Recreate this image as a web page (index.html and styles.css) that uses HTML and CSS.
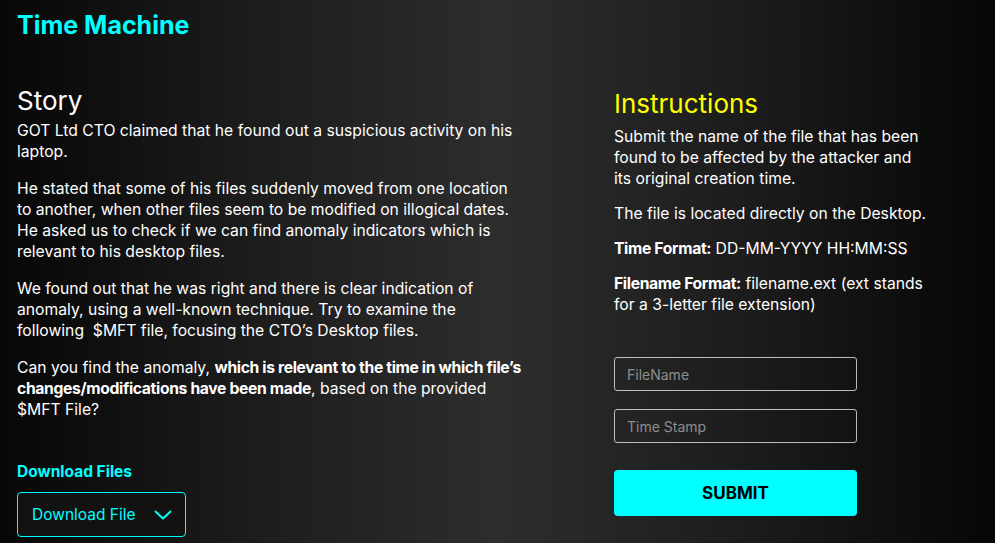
FILE: index.html
```html
<!DOCTYPE html>
<html>
<head>
<meta charset="utf-8">
<link rel="stylesheet" href="styles.css">
</head>
<body>
<div class="page">
  <h1 class="title">Time Machine</h1>
  <div class="columns">
    <section class="story">
      <h2 class="heading">Story</h2>
      <p>GOT Ltd CTO claimed that he found out a suspicious activity on his<br>laptop.</p>
      <p>He stated that some of his files suddenly moved from one location<br>to another, when other files seem to be modified on illogical dates.<br>He asked us to check if we can find anomaly indicators which is<br>relevant to his desktop files.</p>
      <p>We found out that he was right and there is clear indication of<br>anomaly, using a well-known technique. Try to examine the<br>following&nbsp; $MFT file, focusing the CTO’s Desktop files.</p>
      <p>Can you find the anomaly, <strong>which is relevant to the time in which file’s<br>changes/modifications have been made</strong>, based on the provided<br>$MFT File?</p>
      <div class="downloads">
        <div class="dl-label">Download Files</div>
        <button class="dl-select" type="button">
          <span>Download File</span>
          <svg width="18" height="10" viewBox="0 0 18 10"><path d="M1.5 1.5 L9 8.5 L16.5 1.5" fill="none" stroke="#00ffff" stroke-width="2" stroke-linecap="round" stroke-linejoin="round"/></svg>
        </button>
      </div>
    </section>
    <section class="instructions">
      <h2 class="heading yellow">Instructions</h2>
      <p>Submit the name of the file that has been<br>found to be affected by the attacker and<br>its original creation time.</p>
      <p>The file is located directly on the Desktop.</p>
      <p><strong>Time Format:</strong> DD-MM-YYYY HH:MM:SS</p>
      <p><strong>Filename Format:</strong> filename.ext (ext stands<br>for a 3-letter file extension)</p>
      <form class="form">
        <input class="field" type="text" placeholder="FileName">
        <input class="field" type="text" placeholder="Time Stamp">
        <button class="submit" type="button">SUBMIT</button>
      </form>
    </section>
  </div>
</div>
</body>
</html>
```
FILE: styles.css
```css
* { box-sizing: border-box; }
html, body { margin: 0; height: 100%; }
body {
  background: linear-gradient(to right, #070707 0%, #1c1c1c 25%, #2d2d2d 50%, #1c1c1c 75%, #060606 100%);
  font-family: Inter, "Noto Sans", sans-serif;
  color: #ffffff;
  overflow: hidden;
}
.page { padding: 10px 0 0 17px; }
.title {
  margin: 0;
  font-size: 25px;
  font-weight: 700;
  color: #00ffff;
  line-height: 30px;
}
.columns {
  display: flex;
  gap: 92px;
  margin-top: 45px;
}
.story { width: 505px; white-space: nowrap; }
.instructions { width: 340px; padding-top: 3px; white-space: nowrap; }
.heading {
  margin: 0 0 3px;
  font-size: 26px;
  font-weight: 400;
  line-height: 32px;
}
.instructions .heading { margin-bottom: 6px; }
.yellow { color: #ffff00; }
p {
  margin: 0 0 16px;
  font-size: 15.7px;
  line-height: 21px;
}
.instructions p { margin-bottom: 14px; }
strong { font-weight: 700; letter-spacing: -0.35px; }
.downloads { margin-top: 42px; }
.dl-label {
  font-size: 15.5px;
  font-weight: 700;
  color: #00ffff;
  line-height: 20px;
  margin-bottom: 10px;
}
.dl-select {
  display: flex;
  align-items: center;
  justify-content: space-between;
  height: 45px;
  width: 169px;
  padding: 0 13px 0 14px;
  background: #121212;
  border: 1px solid #00ffff;
  border-radius: 4px;
  color: #00ffff;
  font-family: inherit;
  font-size: 15.5px;
  white-space: nowrap;
}
.form {
  display: flex;
  flex-direction: column;
  width: 243px;
  margin-top: 42px;
}
.field {
  height: 34px;
  margin-bottom: 18px;
  background: transparent;
  border: 1px solid #bdbdbd;
  border-radius: 3px;
  padding: 0 12px;
  font-family: inherit;
  font-size: 14px;
  color: #fff;
}
.field::placeholder { color: #8e8e8e; }
.field + .field { margin-bottom: 27px; }
.submit {
  height: 46px;
  background: #00ffff;
  border: none;
  border-radius: 4px;
  color: #000;
  font-family: inherit;
  font-size: 17px;
  font-weight: 700;
}
```
